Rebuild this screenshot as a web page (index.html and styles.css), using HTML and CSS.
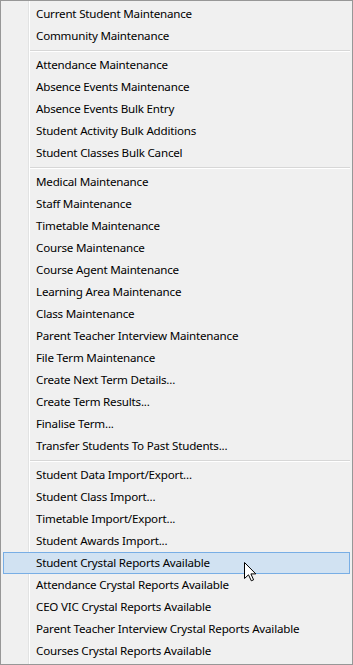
FILE: index.html
```html
<!DOCTYPE html>
<html lang="en">
<head>
  <meta charset="UTF-8" />
  <meta name="viewport" content="width=device-width, initial-scale=1.0"/>
  <title>Menu</title>
  <link rel="stylesheet" href="styles.css">
</head>
<body>

  <div class="menu">
    <div class="item">Current Student Maintenance</div>
    <div class="item">Community Maintenance</div>
    <div class="sep"></div>
    <div class="item">Attendance Maintenance</div>
    <div class="item">Absence Events Maintenance</div>
    <div class="item">Absence Events Bulk Entry</div>
    <div class="item">Student Activity Bulk Additions</div>
    <div class="item">Student Classes Bulk Cancel</div>
    <div class="sep"></div>
    <div class="item">Medical Maintenance</div>
    <div class="item">Staff Maintenance</div>
    <div class="item">Timetable Maintenance</div>
    <div class="item">Course Maintenance</div>
    <div class="item">Course Agent Maintenance</div>
    <div class="item">Learning Area Maintenance</div>
    <div class="item">Class Maintenance</div>
    <div class="item">Parent Teacher Interview Maintenance</div>
    <div class="item">File Term Maintenance</div>
    <div class="item">Create Next Term Details...</div>
    <div class="item">Create Term Results...</div>
    <div class="item">Finalise Term...</div>
    <div class="item">Transfer Students To Past Students...</div>
    <div class="sep"></div>
    <div class="item">Student Data Import/Export...</div>
    <div class="item">Student Class Import...</div>
    <div class="item">Timetable Import/Export...</div>
    <div class="item">Student Awards Import...</div>
    <div class="item active">Student Crystal Reports Available</div>
    <div class="item">Attendance Crystal Reports Available</div>
    <div class="item">CEO VIC Crystal Reports Available</div>
    <div class="item">Parent Teacher Interview Crystal Reports Available</div>
    <div class="item">Courses Crystal Reports Available</div>

    <!-- mouse pointer -->
    <svg class="cursor" width="14" height="20" viewBox="0 0 14 20">
      <path d="M0.5 0.5 L0.5 16.5 L4.5 12.8 L7.3 18.8 L9.6 17.8 L6.9 11.9 L11.8 11.9 Z" fill="#fff" stroke="#000" stroke-width="1" stroke-linejoin="miter"/>
    </svg>
  </div>

</body>
</html>
```

FILE: styles.css
```css
* {
  box-sizing: border-box;
}
body {
  margin: 0;
  font-family: 'Segoe UI', 'Noto Sans', sans-serif;
  font-size: 11.6px;
  letter-spacing: -0.2px;
  color: #000;
}
.menu {
  position: relative;
  width: 353px;
  height: 665px;
  padding: 2px;
  border: 1px solid #979797;
  /* icon gutter line */
  background: linear-gradient(to right, #f0f0f0 27px, #e2e3e3 27px, #e2e3e3 28px, #fff 28px, #fff 29px, #f0f0f0 29px);
  background-color: #f0f0f0;
}
.item {
  height: 22px;
  line-height: 22px;
  padding-left: 33px;
  white-space: nowrap;
}
.item.active {
  background: #d1e2f2;
  border: 1px solid #78aee5;
  line-height: 20px;
  padding-left: 32px;
}
.sep {
  height: 7px;
  padding-top: 3px;
  margin-left: 27px;
}
.sep::before {
  content: "";
  display: block;
  height: 1px;
  background: #d7d7d7;
  border-bottom: 1px solid #fff;
  box-sizing: content-box;
}
.cursor {
  position: absolute;
  left: 243px;
  top: 561px;
}
```
